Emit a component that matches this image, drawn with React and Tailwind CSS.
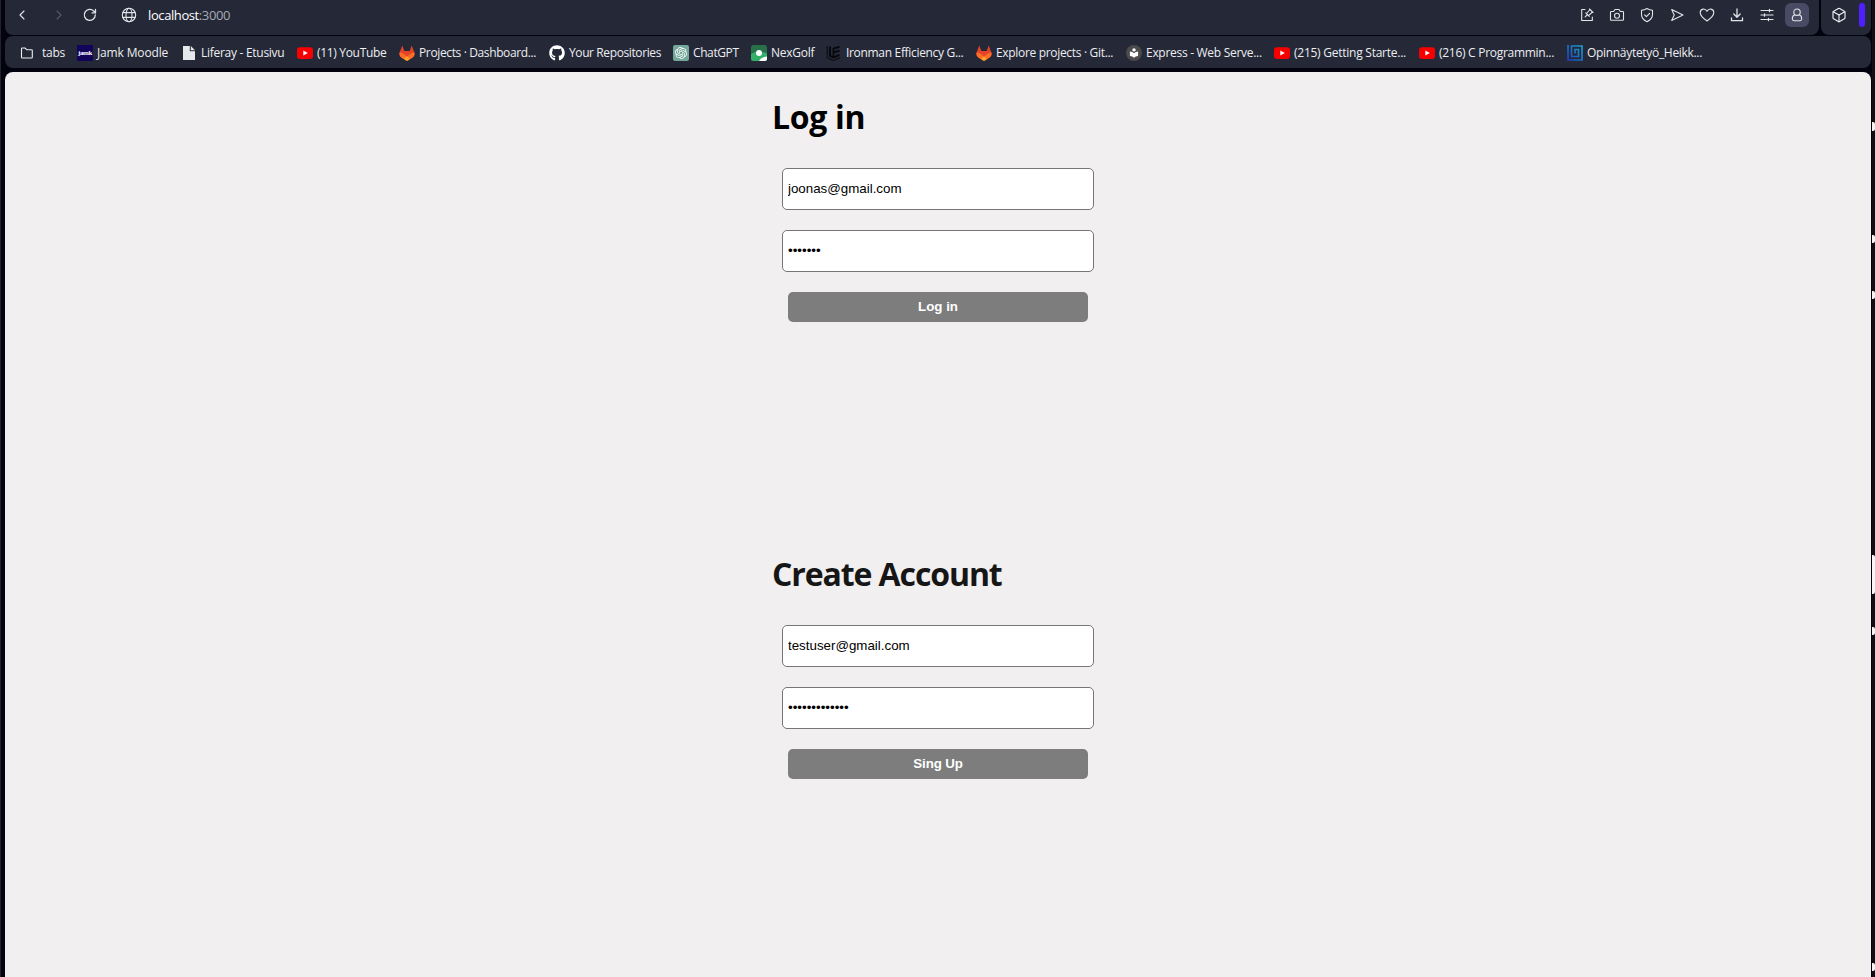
import React from "react";
import { Box, ChevronLeft, ChevronRight } from "lucide-react";
import { FaGithub } from "react-icons/fa";
import { SiOpenai } from "react-icons/si";

const Stroke = ({ children, className = "size-4", w = 1.1 }) => (
  <svg viewBox="0 0 16 16" className={`shrink-0 ${className}`} fill="none" stroke="currentColor" strokeWidth={w} strokeLinecap="round" strokeLinejoin="round">
    {children}
  </svg>
);

const Folder = () => (
  <Stroke className="size-4" w={1.1}>
    <path d="M2.5 12.2v-8.400q0-.8.8-.8h2.600l1.900 1.700h4.700q.8 0 .8.8v6.700q0 .8-.8.800h-9.200q-.8 0-.8-.8z" />
  </Stroke>
);
const Jamk = () => (
  <span className="flex size-4 shrink-0 items-center justify-center bg-[#12045a] font-['Liberation_Serif',serif] text-[7px] leading-none font-bold tracking-tighter text-white">jamk</span>
);
const Page = () => (
  <svg viewBox="0 0 16 16" className="size-4 shrink-0" fill="#e6e9ec">
    <path d="M2 1h6.800v5.200h5.200v8.800h-12z" />
    <path d="M9.800 1l4.200 4.200h-4.200z" />
  </svg>
);
const YouTube = () => (
  <svg viewBox="0 0 16 16" className="size-4 shrink-0">
    <rect y="2.300" width="16" height="11.600" rx="3" fill="#f80000" />
    <path d="M6.300 5.600v5l4.600-2.500z" fill="#fff" />
  </svg>
);
const GitLab = () => (
  <svg viewBox="0 0 16 16" className="size-4 shrink-0">
    <path d="M3.300.4l2 5.600h5.400l2-5.600 2.600 6.800q1 3.400-1.700 5.300L8 16l-5.600-3.500Q-.3 10.600.7 7.200z" fill="#e24329" />
    <path d="M.7 7.200q2.300.3 4.400 2L8 11.600l-3 2.600-2.600-1.700Q-.3 10.600.7 7.200z" fill="#fc6d26" />
    <path d="M15.300 7.200q-2.300.3-4.400 2L8 11.600l3 2.600 2.600-1.700q2.700-1.900 1.700-5.300z" fill="#fc6d26" />
    <path d="M8 11.300l3.200 2.600L8 16l-3.200-2.100z" fill="#fca326" />
  </svg>
);
const GitHub = () => <FaGithub className="size-4 shrink-0 text-white" />;
const ChatGpt = () => (
  <span className="flex size-4 shrink-0 items-center justify-center rounded-xs bg-[#74a89a] text-white">
    <SiOpenai className="size-3" />
  </span>
);
const NexGolf = () => (
  <svg viewBox="0 0 16 16" className="size-4 shrink-0">
    <clipPath id="golf"><rect width="16" height="16" rx="2.500" /></clipPath>
    <g clipPath="url(#golf)">
      <rect width="16" height="16" fill="#27704a" />
      <path d="M0 9q5-4 16-1v8H0z" fill="#32b069" />
      <path d="M8 16q2-4 8-4.500V16z" fill="#fff" />
      <circle cx="8" cy="8" r="3" fill="#fff" />
    </g>
  </svg>
);
const Ironman = () => (
  <svg viewBox="0 0 16 16" className="size-4 shrink-0" fill="none" stroke="#07080c">
    <path d="M1.200 1v11.800L7.500 15.500l6.500-2.700" strokeWidth="1" />
    <path d="M4 1.500v9.300l3.500 1.500 6-2.300M7.300 3.600l6.200-1.900M7.300 7.500l6.200-1.900" strokeWidth="2" />
    <path d="M7.300 3v8.500" strokeWidth="1.500" />
  </svg>
);
const Express = () => (
  <svg viewBox="0 0 16 16" className="size-4 shrink-0">
    <circle cx="8" cy="8" r="8" fill="#4b4b4b" />
    <circle cx="8" cy="4.900" r="1.700" fill="#fff" />
    <path d="M3.900 6.600Q6.500 6.800 8 8.200q1.500-1.400 4.100-1.600v4.400Q9.500 11.300 8 12.700q-1.500-1.400-4.100-1.700z" fill="#fff" />
  </svg>
);
const Spiral = () => (
  <svg viewBox="0 0 16 16" className="size-4 shrink-0">
    <defs>
      <linearGradient id="spiral" x1="0" y1="1" x2="1" y2="0">
        <stop offset="0" stopColor="#1c3fc0" />
        <stop offset="1" stopColor="#18a3cf" />
      </linearGradient>
    </defs>
    <path d="M1 0V15H15V1H4.500V11.500H11.500V4.500H8V8.500" fill="none" stroke="url(#spiral)" strokeWidth="1.700" />
  </svg>
);

const bookmarks = [
  [Jamk, "Jamk Moodle", "w-[104px]", "tracking-[-0.15px]"],
  [Page, "Liferay - Etusivu", "w-[116px]", "tracking-[-0.28px]"],
  [YouTube, "(11) YouTube", "w-[102px]", "tracking-[-0.32px]"],
  [GitLab, "Projects · Dashboard...", "w-[150px]", "tracking-[-0.37px]"],
  [GitHub, "Your Repositories", "w-[124px]", "tracking-[-0.39px]"],
  [ChatGpt, "ChatGPT", "w-[78px]", "tracking-[-0.4px]"],
  [NexGolf, "NexGolf", "w-[75px]", "tracking-[-0.25px]"],
  [Ironman, "Ironman Efficiency G...", "w-[150px]", "tracking-[-0.32px]"],
  [GitLab, "Explore projects · Git...", "w-[150px]", "tracking-[-0.32px]"],
  [Express, "Express - Web Serve...", "w-[148px]", "tracking-[-0.29px]"],
  [YouTube, "(215) Getting Starte...", "w-[145px]", "tracking-[-0.25px]"],
  [YouTube, "(216) C Programmin...", "w-[148px]", "tracking-[-0.28px]"],
  [Spiral, "Opinnäytetyö_Heikk...", "w-[150px]", "tracking-[-0.31px]"],
];

function Toolbar() {
  return (
    <div className="flex h-[35px] shrink-0 gap-[2px]">
      <div className="flex h-[35px] w-[1814px] items-start rounded-b-lg bg-[#252836] pt-[3px] text-[#e2e4e8]">
        <div className="flex h-6 w-full items-center">
          <ChevronLeft className="ml-[9px] size-4 shrink-0" strokeWidth={1.700} />
          <ChevronRight className="ml-[21px] size-4 shrink-0 text-[#555968]" strokeWidth={1.700} />
          <Stroke className="ml-[15px] size-4" w={1.300}>
            <path d="M13.300 8a5.500 5.500 0 1 1-1.600-4l1.700 1.600" />
            <path d="M13.500 2.500v3.400h-3.400" />
          </Stroke>
          <Stroke className="ml-[23px] size-4" w={1.100}>
            <circle cx="8" cy="8" r="6.700" />
            <ellipse cx="8" cy="8" rx="3" ry="6.700" />
            <path d="M2 5.600h12M2 10.400h12" />
          </Stroke>
          <span className="ml-[11px] w-[100px] text-[13px] leading-6 tracking-[-0.4px] whitespace-nowrap text-white">
            localhost<span className="text-[#a6aab7]">:3000</span>
          </span>
          <div className="ml-auto flex h-6 items-center gap-[14px]">
            <Stroke>
              <path d="M6 2.500H2.700v11h10.600V10M6.200 9.800l2.300-2.300M6.700 5.800l3.500 3.500M8 6l3-3.500 2.500 2.500L10 8.100M10.500 2l3.500 3.500" />
            </Stroke>
            <Stroke>
              <path d="M2.300 4.500h2.400l1.300-2h4l1.300 2h2.400q.8 0 .8.8v7.200q0 .8-.8.800H2.300q-.8 0-.8-.8V5.300q0-.8.8-.8z" />
              <circle cx="8" cy="8.700" r="2.500" />
            </Stroke>
            <Stroke>
              <path d="M8 1.500q2.500 1.600 5.500 1.800v4.200q0 4.500-5.500 7.200-5.500-2.700-5.500-7.200V3.300Q5.500 3.100 8 1.500zM5.600 7.800l1.800 1.800 3.200-3.300" />
            </Stroke>
            <Stroke>
              <path d="M2.700 2.500L14 8 2.700 13.500 5.200 8z" />
            </Stroke>
            <Stroke>
              <path d="M8 14Q1.200 9.500 1.200 5.600q0-3 2.900-3.500Q6.600 1.800 8 4.300q1.400-2.500 3.900-2.200 2.900.5 2.900 3.500Q14.800 9.500 8 14z" />
            </Stroke>
            <Stroke w={1.300}>
              <path d="M8 2v8M4.800 7L8 10.200 11.200 7M2.500 11v2.700h11V11" />
            </Stroke>
            <Stroke w={1.200}>
              <path d="M2 3.500h12M2 8h12M2 12.500h12M10.500 2.300v2.400M5.500 6.800v2.400M9.500 11.300v2.400" />
            </Stroke>
          </div>
          <div className="mr-[10px] ml-[10px] flex size-6 shrink-0 items-center justify-center rounded-md bg-[#484b63]">
            <Stroke>
              <circle cx="8" cy="5.200" r="3.200" />
              <path d="M5.800 7.800Q3.300 8.600 3.300 11.800q0 1.900 1.700 1.900h6q1.700 0 1.700-1.900 0-3.200-2.500-4" />
            </Stroke>
          </div>
        </div>
      </div>
      <div className="flex h-[35px] w-[50px] rounded-b-lg bg-[#252836] pt-[3px]">
        <Box className="mt-1 ml-[10px] size-4 text-[#f0f1f4]" strokeWidth={1.700} />
        <span className="ml-3 h-6 w-1.5 rounded-full bg-[#4f20ff]" />
      </div>
    </div>
  );
}

function AccountForm({ title, email, password, action, titleClass, actionClass }) {
  return (
    <form className="h-[457px] w-[330px] shrink-0" onSubmit={(e) => e.preventDefault()}>
      <h1 className={`-ml-px h-[75px] pt-[2px] text-[32px] leading-[43px] font-bold whitespace-nowrap ${titleClass}`}>{title}</h1>
      <div className="flex flex-col items-center gap-5">
        <input readOnly type="email" value={email} className="h-[42px] w-[312px] rounded-[5px] border border-[#767676] bg-white px-[5px] pb-[2px] font-['Liberation_Sans',Arial,sans-serif] text-[13.33px] text-black outline-none" />
        <input readOnly type="password" value={password} className="h-[42px] w-[312px] rounded-[5px] border border-[#767676] bg-white px-[5px] pb-[2px] font-['Liberation_Sans',Arial,sans-serif] text-[13.33px] text-black outline-none" />
        <button className={`h-[30px] w-[300px] rounded-[5px] bg-[#7d7d7d] font-['Liberation_Sans',Arial,sans-serif] text-[13.33px] font-bold text-white ${actionClass}`}>{action}</button>
      </div>
    </form>
  );
}

export default function App() {
  return (
    <div className="flex h-[977px] w-[1875px] overflow-hidden bg-[#02030f] font-['Open_Sans','Noto_Sans',sans-serif]">
      <div className="mr-1 w-px bg-[#20222c]" />
      <div className="flex w-[1866px] flex-col">
        <Toolbar />
        <div className="mt-px flex h-8 shrink-0 items-center rounded-lg bg-[#252836] pt-[2px] pl-[14px] text-xs text-[#eceef2]">
          <div className="flex w-[58px] items-center gap-[7px] whitespace-nowrap">
            <Folder />
            <span className="tracking-[-0.25px]">tabs</span>
          </div>
          {bookmarks.map(([Icon, label, width, tracking], i) => (
            <div key={i} className={`flex shrink-0 items-center gap-1 whitespace-nowrap ${width}`}>
              <Icon />
              <span className={`leading-4 ${tracking}`}>{label}</span>
            </div>
          ))}
        </div>
        <main className="mt-1 flex min-h-0 flex-1 flex-col items-center overflow-hidden rounded-t-lg bg-[#f1eff0] pt-[21px]">
          <AccountForm title="Log in" email="joonas@gmail.com" password="joonas1" action="Log in" titleClass="text-black tracking-[-0.3px]" actionClass="tracking-[0px]" />
          <AccountForm title="Create Account" email="testuser@gmail.com" password="testuser12345" action="Sing Up" titleClass="text-[#161616] tracking-[-1.1px]" actionClass="tracking-[-0.15px]" />
        </main>
      </div>
      <div className="ml-px flex w-[3px] flex-col bg-[#0e1015]">
        <span className="mt-[122px] h-[9px] rounded-r-xs bg-[#f4f4f4]" />
        <span className="mt-[104px] h-2 rounded-r-xs bg-[#f4f4f4]" />
        <span className="mt-12 h-2 rounded-r-xs bg-[#f4f4f4]" />
        <span className="mt-64 h-[39px] rounded-r-xs bg-[#f4f6f8]" />
        <span className="mt-[33px] h-2 rounded-r-xs bg-[#f4f4f4]" />
        <span className="mt-[328px] h-2 rounded-r-xs bg-[#f4f4f4]" />
      </div>
    </div>
  );
}
